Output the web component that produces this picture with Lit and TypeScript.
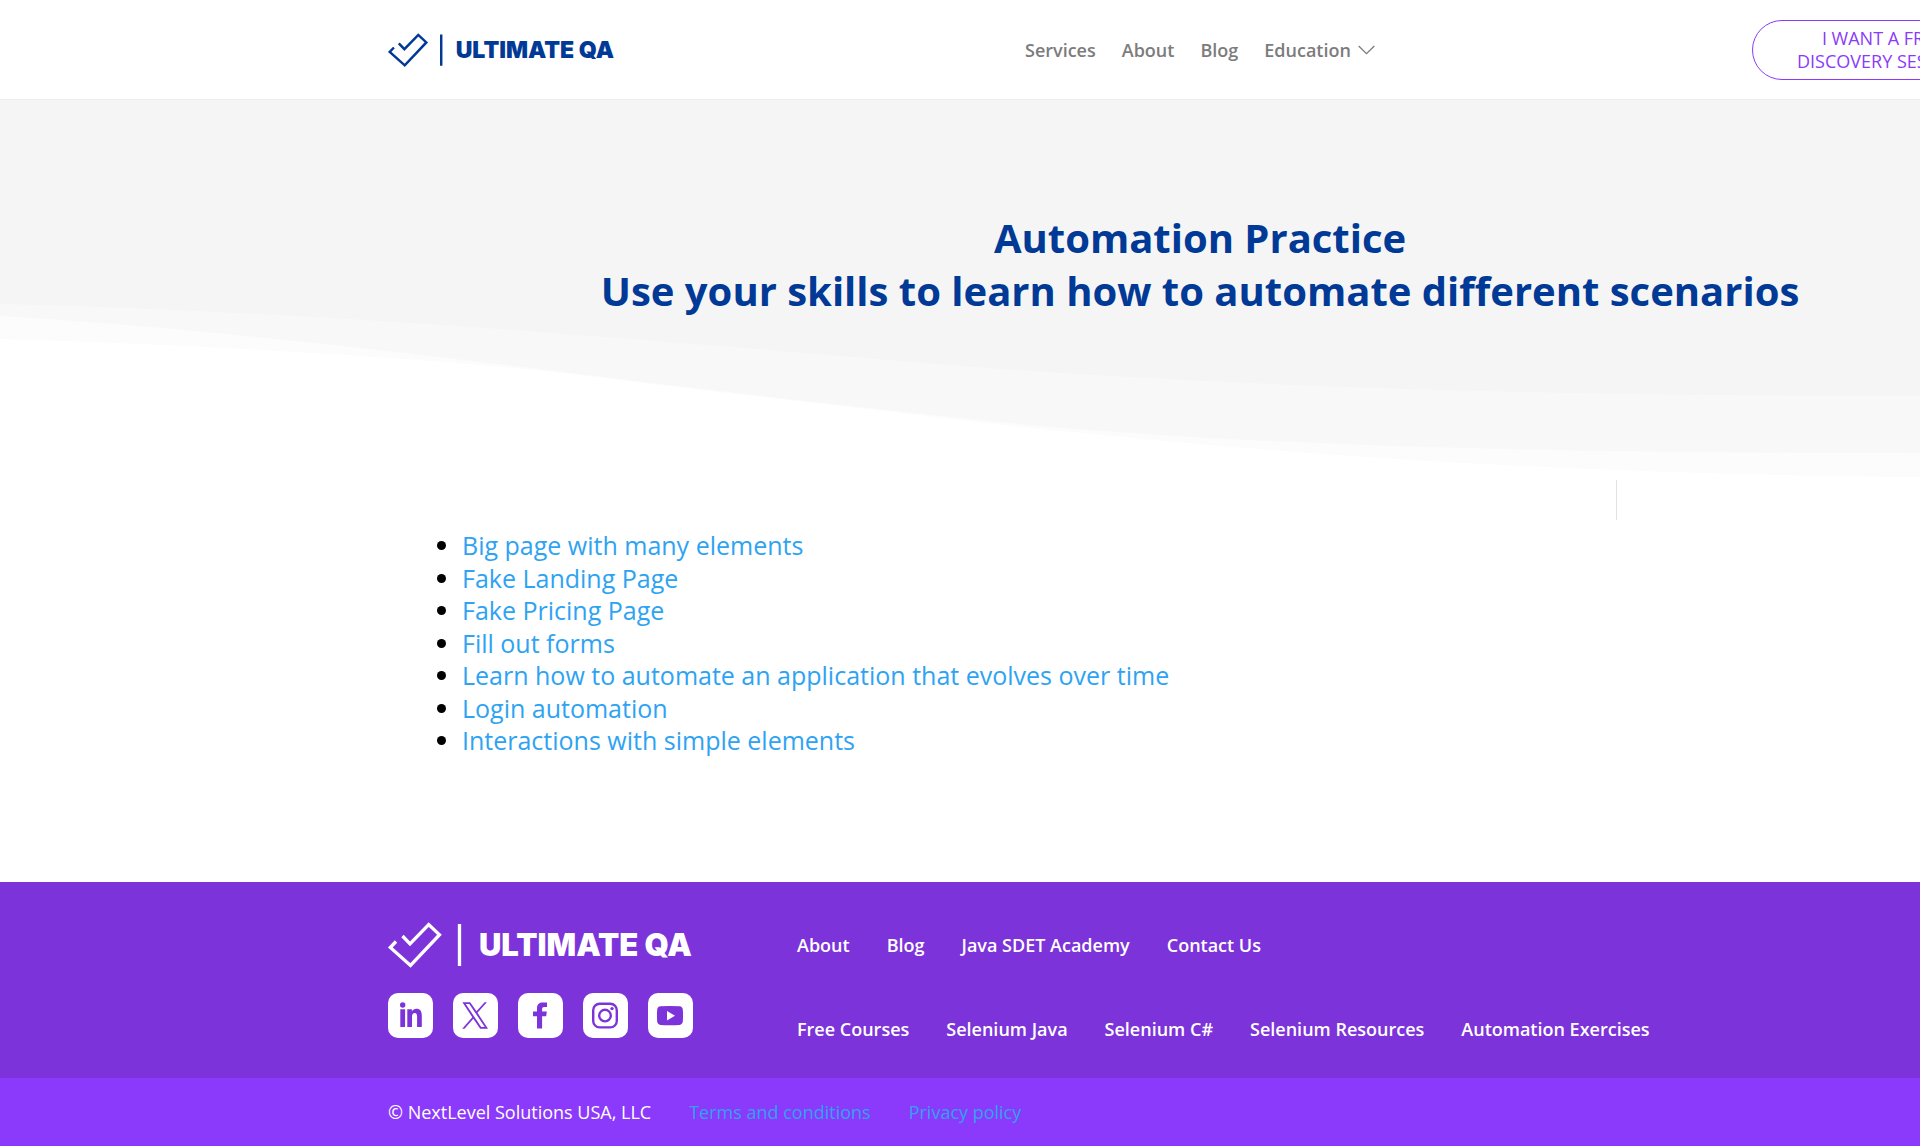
import { LitElement, html, css, svg } from "lit";
import { customElement } from "lit/decorators.js";

const practiceLinks = [
  "Big page with many elements",
  "Fake Landing Page",
  "Fake Pricing Page",
  "Fill out forms",
  "Learn how to automate an application that evolves over time",
  "Login automation",
  "Interactions with simple elements",
];

const footerTop = ["About", "Blog", "Java SDET Academy", "Contact Us"];
const footerBottom = [
  "Free Courses",
  "Selenium Java",
  "Selenium C#",
  "Selenium Resources",
  "Automation Exercises",
];

const socials = [
  {
    name: "LinkedIn",
    icon: svg`<circle cx="14.7" cy="12" r="2.7"/><path d="M12.3 16.2h4.8V34h-4.800zM19.300 16.200h4.600v2.300c1-1.700 2.500-2.700 4.500-2.700 3.800 0 5.400 2.600 5.400 6.900V34h-4.700V23.900c0-2.400-.6-3.900-2.300-3.900-1.900 0-2.800 1.400-2.800 3.900V34h-4.700z"/>`,
  },
  {
    name: "X",
    icon: svg`<path fill-rule="evenodd" d="M9.400 9.300h7.800l6.300 9 8.100-9h2.300l-9.400 10.500L35 35.700h-7.800l-6.900-9.900-8.800 9.900H9.200l10.100-11.400zM12.700 11l15.500 23h3.600L16.300 11z"/>`,
  },
  {
    name: "Facebook",
    icon: svg`<path d="M19 35.500V23.200h-4v-4.600h4v-3.300c0-4 2.100-5.900 6-5.900h4v4.500h-2.600c-1.700 0-2.300.8-2.300 2.300v2.400h4.700l-.6 4.600h-4.100v12.300z"/>`,
  },
  {
    name: "Instagram",
    icon: svg`<g fill="none" stroke="currentColor" stroke-width="2.400"><rect x="10.200" y="10.800" width="23.600" height="23.600" rx="6.500"/><circle cx="22" cy="22.600" r="5.800"/></g><circle cx="29" cy="15.600" r="1.700"/>`,
  },
  {
    name: "YouTube",
    icon: svg`<path fill-rule="evenodd" d="M12.500 13.300q9.500-.8 19 0 3 .4 3.300 3.300.5 6 0 12-.3 2.900-3.300 3.300-9.500.8-19 0-3-.4-3.300-3.300-.5-6 0-12 .3-2.900 3.300-3.300zM19 18v9.400l8-4.700z"/>`,
  },
];

@customElement("brand-logo")
export class BrandLogo extends LitElement {
  static styles = css`
    :host {
      display: block;
    }
    .logo {
      display: block;
      width: 100%;
      overflow: visible;
    }
    .mark {
      fill: none;
      stroke: currentColor;
      stroke-width: 3.300;
    }
    .name {
      font-family: Inter, "Open Sans", sans-serif;
      font-weight: 900;
      font-size: 31px;
      fill: currentColor;
    }
  `;
  render() {
    return html`<svg class="logo" viewBox="0 0 305 46" role="img" aria-label="Ultimate QA">
      <path class="mark" d="M8 19.500 2.300 25.500 22.500 43.500 51.500 12.700 40.700 2.500 22 21.800 14.500 14" />
      <path class="mark" d="M71.500 2v42" />
      <text class="name" x="91" y="34">ULTIMATE QA</text>
    </svg>`;
  }
}

@customElement("app-root")
export class AppRoot extends LitElement {
  static styles = css`
    :host {
      display: block;
      overflow: hidden;
      font-family: "Open Sans", "Noto Sans", sans-serif;
      background: #fff;
      color: #000;
    }
    a {
      text-decoration: none;
      color: inherit;
    }
    ul {
      margin: 0;
      padding: 0;
      list-style: none;
    }
    .header {
      display: grid;
      grid-template-columns: 637px 727px auto;
      justify-content: start;
      align-items: center;
      box-sizing: border-box;
      height: 100px;
      padding-left: 388px;
      border-bottom: 1px solid #eee;
    }
    .home {
      padding-top: 2px;
    }
    .header-logo {
      width: 227px;
      color: #003a96;
    }
    .nav {
      display: flex;
      gap: 26px;
      font-size: 18px;
      font-weight: 600;
      color: #7c7c7c;
    }
    .has-menu {
      display: flex;
      align-items: center;
      gap: 7px;
    }
    .chevron {
      width: 17px;
      height: 10px;
      fill: none;
      stroke: currentColor;
      stroke-width: 1.3;
    }
    .cta {
      border: 1px solid #8b3afb;
      border-radius: 30px;
      padding: 6px 44px;
      font-size: 18px;
      font-weight: 500;
      line-height: 23px;
      text-align: center;
      white-space: nowrap;
      color: #8b3afb;
    }
    .hero {
      position: relative;
      box-sizing: border-box;
      height: 380px;
      padding: 111px 0 0 25%;
      background: #f5f5f5;
    }
    .title {
      margin: 0;
      position: relative;
      font-size: 40px;
      font-weight: 700;
      line-height: 53px;
      text-align: center;
      color: #003a96;
    }
    .wave {
      position: absolute;
      left: 0;
      bottom: 0;
      width: 100%;
      height: 180px;
    }
    .tint {
      fill: #f8f8f8;
    }
    .pale {
      fill: #fcfcfc;
    }
    .white {
      fill: #fff;
    }
    .content {
      display: grid;
      grid-template-columns: 1616px 1fr;
      padding-bottom: 125px;
    }
    .rule {
      width: 1px;
      height: 40px;
      background: #e2e2e2;
    }
    .list {
      list-style: disc;
      padding: 49px 0 0 462px;
      font-size: 25px;
      line-height: 1.3;
    }
    .list a {
      color: #2ea3f2;
    }
    .footer {
      display: grid;
      grid-template-columns: 409px 1fr;
      box-sizing: border-box;
      height: 196px;
      padding: 40px 0 0 388px;
      background: #7c33d9;
      color: #fff;
    }
    .brand {
      width: 305px;
    }
    .socials {
      display: flex;
      justify-content: space-between;
      margin-top: 25px;
    }
    .social {
      display: block;
      width: 45px;
      height: 45px;
      border-radius: 10px;
      background: #fff;
      color: #7c33d9;
    }
    .social svg {
      display: block;
      fill: currentColor;
    }
    .menus {
      display: grid;
      align-content: start;
      gap: 60px;
      padding-top: 11px;
      font-size: 18px;
      font-weight: 600;
      line-height: 24px;
    }
    .menu {
      display: flex;
      gap: 37px;
    }
    .legal {
      display: flex;
      align-items: center;
      gap: 38px;
      height: 68px;
      padding-left: 388px;
      background: #8b3afb;
      color: #fff;
      font-size: 18px;
    }
    .legal a {
      color: #2ea3f2;
    }
  `;

  private menu(items: string[]) {
    return html`<ul class="menu">
      ${items.map((t) => html`<li><a href="#">${t}</a></li>`)}
    </ul>`;
  }

  render() {
    return html`
      <header class="header">
        <a class="home" href="#" aria-label="Home"><brand-logo class="header-logo"></brand-logo></a>
        <nav>
          <ul class="nav">
            <li><a href="#">Services</a></li>
            <li><a href="#">About</a></li>
            <li><a href="#">Blog</a></li>
            <li>
              <a class="has-menu" href="#">Education
                <svg class="chevron" viewBox="0 0 17 10"><path d="M.7 1 8.500 8.700 16.300 1" /></svg>
              </a>
            </li>
          </ul>
        </nav>
        <a class="cta" href="#">I WANT A FREE<br />DISCOVERY SESSION</a>
      </header>
      <main>
        <section class="hero">
          <svg class="wave" viewBox="0 300 1920 180" preserveAspectRatio="none" aria-hidden="true">
            <path class="tint" d="M0 304C330 312 650 340 960 366 1200 384 1500 396 1920 396V480H0z" />
            <path class="pale" d="M0 316C200 328 400 352 563 372 690 388 830 404 960 418 1200 444 1500 453 1920 453V480H0z" />
            <path class="white" d="M0 339C200 345 400 356 563 373 690 389 830 405 960 420 1250 453 1550 474 1920 477V480H0z" />
          </svg>
          <h1 class="title">Automation Practice<br />Use your skills to learn how to automate different scenarios</h1>
        </section>
        <section class="content">
          <ul class="list">
            ${practiceLinks.map((t) => html`<li><a href="#">${t}</a></li>`)}
          </ul>
          <div class="rule"></div>
        </section>
      </main>
      <footer>
        <div class="footer">
          <div class="brand">
            <brand-logo></brand-logo>
            <div class="socials">
              ${socials.map(
                (s) => html`<a class="social" href="#" aria-label=${s.name}>
                  <svg viewBox="0 0 45 45" width="45" height="45">${s.icon}</svg>
                </a>`
              )}
            </div>
          </div>
          <nav class="menus">${this.menu(footerTop)}${this.menu(footerBottom)}</nav>
        </div>
        <div class="legal">
          <span>© NextLevel Solutions USA, LLC</span>
          <a href="#">Terms and conditions</a>
          <a href="#">Privacy policy</a>
        </div>
      </footer>
    `;
  }
}
